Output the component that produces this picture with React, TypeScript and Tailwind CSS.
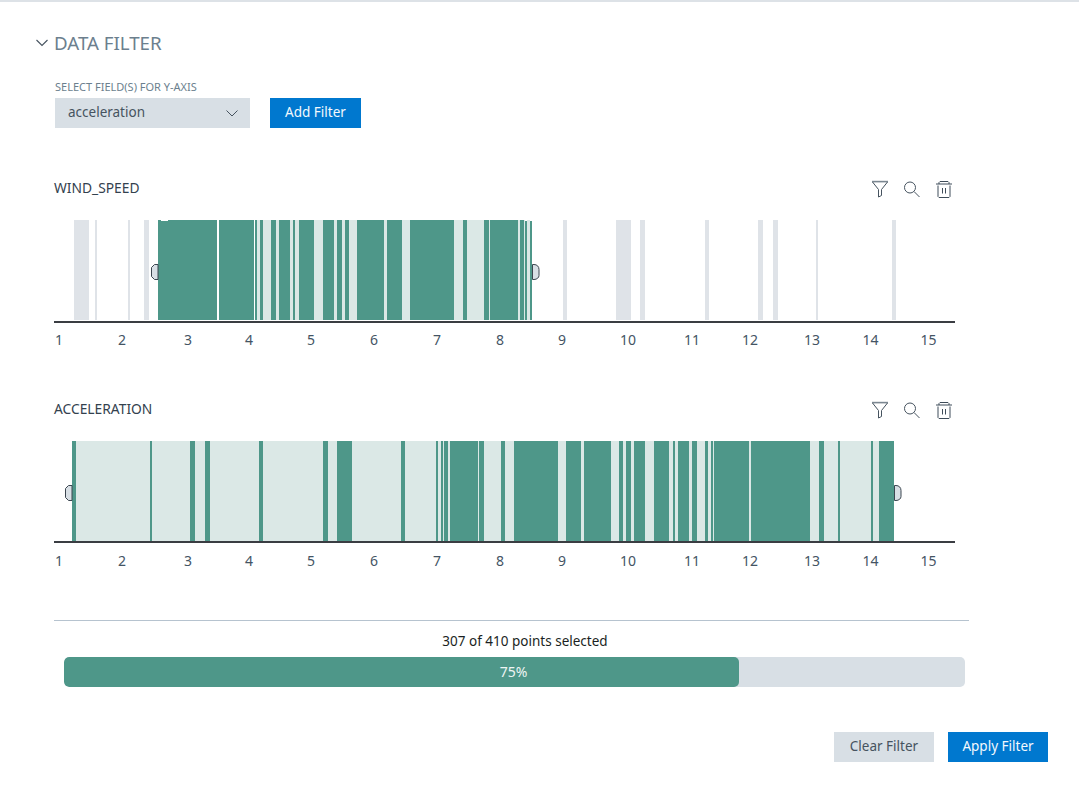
import React from 'react';

const FONT = "font-['Noto_Sans','Open_Sans',sans-serif]";

const TICKS: [string, number][] = [
  ['1', 59], ['2', 122], ['3', 188], ['4', 249], ['5', 311],
  ['6', 374], ['7', 437], ['8', 500], ['9', 562], ['10', 628],
  ['11', 692], ['12', 750], ['13', 812], ['14', 870.5], ['15', 928.5],
];

const TEAL = '#4e9789';
const LIGHT = '#dbe8e6';
const GRAY = '#dfe3e8';

// [x1, x2, color]
type Bar = [number, number, string];

const windBars: Bar[] = [
  [74, 89, GRAY], [95, 97, GRAY], [128, 130, GRAY], [144, 149, GRAY],
  [158, 217, TEAL], [219, 254, TEAL], [255, 257, TEAL], [257, 260, LIGHT], [260, 263, TEAL],
  [263, 271, LIGHT], [271, 276, TEAL], [276, 279, LIGHT], [279, 290, TEAL], [290, 293, LIGHT],
  [293, 295, TEAL], [295, 299, LIGHT], [299, 314, TEAL], [314, 323, LIGHT], [323, 334, TEAL],
  [334, 337, LIGHT], [337, 342, TEAL], [342, 345, LIGHT], [345, 349, TEAL], [349, 357, LIGHT],
  [357, 384, TEAL], [384, 387, LIGHT], [387, 402, TEAL], [402, 410, LIGHT], [410, 454, TEAL],
  [454, 463, LIGHT], [463, 467, TEAL], [467, 484, LIGHT], [484, 489, TEAL], [489, 490, LIGHT],
  [490, 518, TEAL], [518, 520, LIGHT], [520, 524, TEAL], [524, 525, LIGHT], [525, 527, TEAL],
  [527, 530, LIGHT], [530, 532, TEAL],
  [563, 567, GRAY], [616, 631, GRAY], [640, 645, GRAY], [705, 709, GRAY], [758, 763, GRAY],
  [773, 778, GRAY], [816, 818, GRAY], [892, 896, GRAY],
];

const accelBars: Bar[] = [
  [72, 76, TEAL], [76, 150, LIGHT], [150, 152, TEAL], [152, 190, LIGHT], [190, 195, TEAL],
  [195, 205, LIGHT], [205, 210, TEAL], [210, 259, LIGHT], [259, 263, TEAL], [263, 323, LIGHT],
  [323, 328, TEAL], [328, 337, LIGHT], [337, 352, TEAL], [352, 401, LIGHT], [401, 405, TEAL],
  [405, 436, LIGHT], [436, 438, TEAL], [438, 441, LIGHT], [441, 443, TEAL], [443, 444, LIGHT],
  [444, 448, TEAL], [448, 450, LIGHT], [450, 478, TEAL], [478, 479, LIGHT], [479, 484, TEAL],
  [484, 501, LIGHT], [501, 505, TEAL], [505, 514, LIGHT], [514, 558, TEAL], [558, 566, LIGHT],
  [566, 581, TEAL], [581, 584, LIGHT], [584, 611, TEAL], [611, 619, LIGHT], [619, 623, TEAL],
  [623, 626, LIGHT], [626, 631, TEAL], [631, 634, LIGHT], [634, 645, TEAL], [645, 654, LIGHT],
  [654, 669, TEAL], [669, 673, LIGHT], [673, 675, TEAL], [675, 678, LIGHT], [678, 689, TEAL],
  [689, 692, LIGHT], [692, 697, TEAL], [697, 705, LIGHT], [705, 708, TEAL], [708, 711, LIGHT],
  [711, 713, TEAL], [713, 714, LIGHT], [714, 749, TEAL], [749, 751, LIGHT], [751, 810, TEAL],
  [810, 819, LIGHT], [819, 824, TEAL], [824, 838, LIGHT], [838, 840, TEAL], [840, 871, LIGHT],
  [871, 873, TEAL], [873, 879, LIGHT], [879, 894, TEAL],
];

function ChartIcons() {
  return (
    <svg width="84" height="20" viewBox="0 -2 84 20" fill="none" className="shrink-0">
      {/* filter */}
      <path d="M4 .6h16" stroke="#7b8791" strokeWidth="1.600" />
      <path d="M4.500 1 10.500 8.500V16l3-1.500V8.500L19.500 1" stroke="#46535f" strokeWidth="1" />
      {/* search */}
      <circle cx="42" cy="6.500" r="5.500" stroke="#46535f" strokeWidth="1" />
      <path d="M46 10.500 51.500 16" stroke="#46535f" strokeWidth="1" />
      {/* trash */}
      <path d="M68 3h16M71 3V1.500L72 .5h8L81 1.500V3M70 4.500V15.500L71 16.500H81L82 15.500V4.500M74.500 7v5.500M77.500 7v5.500" stroke="#3f4d5a" strokeWidth="1" />
    </svg>
  );
}

function Handle({ x, side, y }: { x: number; side: 'left' | 'right'; y: number }) {
  const d =
    side === 'left'
      ? `M${x + 6.5} ${y}H${x + 3}L${x} ${y + 3}V${y + 12}L${x + 3} ${y + 15}H${x + 6.5}Z`
      : `M${x} ${y}H${x + 1.5}C${x + 4.5} ${y} ${x + 6.5} ${y + 2} ${x + 6.5} ${y + 5}V${y + 11}C${x + 6.5} ${y + 13} ${x + 4.5} ${y + 15} ${x + 1.5} ${y + 15}H${x}Z`;
  return <path d={d} fill="#d8dfe5" stroke="#3c4650" strokeWidth="1" />;
}

function Chart({
  title,
  bars,
  handles,
  axisY,
  children,
}: {
  title: string;
  bars: Bar[];
  handles: [number, 'left' | 'right'][];
  axisY: number;
  children?: React.ReactNode;
}) {
  return (
    <div className="flex flex-col">
      <div className="flex items-start justify-between w-[897px] h-[18px] mb-[23px]">
        <span className="-ml-px text-[13.8px] leading-[18px] text-[#33414e]">{title}</span>
        <ChartIcons />
      </div>
      {/* viewBox keeps x in page coordinates */}
      <svg width="902" height="130" viewBox="54 0 902 130" className="block -ml-px" shapeRendering="crispEdges">
        {bars.map(([a, b, c]) => (
          <rect key={a + '-' + b} x={a} y={0} width={b - a} height={100} fill={c} />
        ))}
        {children}
        <rect x={54} y={axisY} width={901} height={2} fill="#3a3d42" />
        <g shapeRendering="auto">
          {handles.map(([x, side]) => (
            <Handle key={x} x={x + 0.5} y={44.5} side={side} />
          ))}
          {TICKS.map(([label, x]) => (
            <text key={label} x={x} y={125} textAnchor="middle" fontSize="14" fill="#445464" fontFamily="'Noto Sans', sans-serif">
              {label}
            </text>
          ))}
        </g>
      </svg>
    </div>
  );
}

export default function App() {
  return (
    <div className={`w-[1079px] h-[792px] bg-white border-t-2 border-[#dde2e7] overflow-hidden ${FONT}`}>

      {/* Header */}
      <div className="flex items-center gap-[6px] pl-[36px] pt-[29px]">
        <svg width="12" height="8" viewBox="0 0 12 8" fill="none">
          <path d="M.5 1 6 6.500 11.500 1" stroke="#46535f" strokeWidth="1.100" />
        </svg>
        <h2 className="text-[18.7px] leading-[24px] text-[#6c7f8e]">DATA FILTER</h2>
      </div>

      <div className="pl-[55px]">
        {/* Field select */}
        <div className="mt-[25px] text-[11px] leading-[14px] text-[#6c7f8e]">SELECT FIELD(S) FOR Y-AXIS</div>
        <div className="flex gap-5 mt-[4px]">
          <div className="flex items-center justify-between w-[195px] h-[30px] pl-[13px] pr-[12px] pb-[2px] bg-[#d8dfe5] text-[13.5px] text-[#46535f]">
            <span>acceleration</span>
            <svg width="12" height="7" viewBox="0 0 12 7" fill="none" className="mt-[2px]">
              <path d="M.5.500 6 6 11.500.500" stroke="#46535f" strokeWidth="1" />
            </svg>
          </div>
          <button className="w-[91px] h-[30px] pb-[2px] bg-[#0078cf] text-[13.5px] text-[#f4f9fd]">Add Filter</button>
        </div>

        {/* Charts */}
        <div className="mt-[51px]">
          <Chart title="WIND_SPEED" bars={windBars} handles={[[151, 'left'], [532, 'right']]} axisY={101}>
            <rect x={161} y={0} width={7} height={1} fill="#ffffff" />
            <rect x={525} y={0} width={2} height={1} fill="#ffffff" />
            <rect x={530} y={0} width={2} height={1} fill="#ffffff" />
          </Chart>
        </div>
        <div className="mt-[50px]">
          <Chart title="ACCELERATION" bars={accelBars} handles={[[65, 'left'], [894, 'right']]} axisY={100} />
        </div>

        {/* Selection summary */}
        <div className="mt-[49px] -ml-px w-[915px] border-t border-[#b6c3cf] pt-[11px]">
          <div className="pl-[27px] text-[13.5px] leading-[18px] text-center text-[#1b1f23]">307 of 410 points selected</div>
          <div className="relative ml-[10px] mt-[7px] w-[901px] h-[30px] rounded-[5px] bg-[#d8dfe5] overflow-hidden">
            <div className="h-full w-[675px] rounded-[5px] bg-[#4e9789]" />
            <span className="absolute inset-0 flex items-center justify-center pr-[2px] pb-[1px] text-[14px] text-[#eef5f4]">75%</span>
          </div>
        </div>
      </div>

      {/* Actions */}
      <div className="flex justify-end gap-[14px] pr-[31px] mt-[45px]">
        <button className="w-[100px] h-[30px] pb-[2px] bg-[#d8dfe5] text-[13.5px] text-[#46535f]">Clear Filter</button>
        <button className="w-[100px] h-[30px] pb-[2px] bg-[#0078cf] text-[13.5px] text-[#f4f9fd]">Apply Filter</button>
      </div>
    </div>
  );
}
